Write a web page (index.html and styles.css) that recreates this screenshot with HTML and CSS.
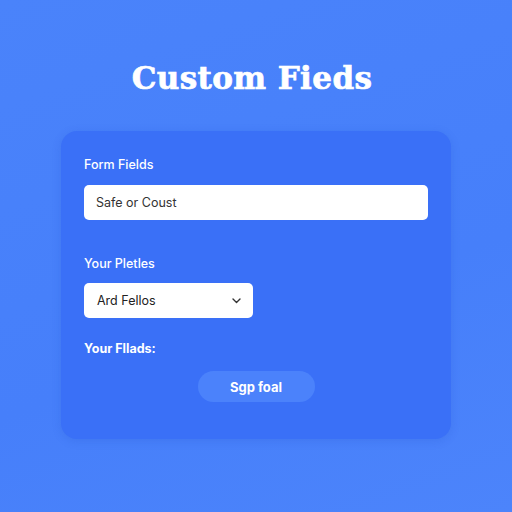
FILE: index.html
```html
<!DOCTYPE html>
<html>
<head>
<meta charset="utf-8">
<link rel="stylesheet" href="styles.css">
</head>
<body>
<main class="page">
  <h1 class="title">Custom Fieds</h1>
  <section class="card">
    <label class="label">Form Fields</label>
    <div class="input">Safe or Coust</div>
    <label class="label label-second">Your Pletles</label>
    <div class="select">
      <span>Ard Fellos</span>
      <svg class="chev" width="9" height="6" viewBox="0 0 9 6"><path d="M1 1l3.5 3.5L8 1" fill="none" stroke="#333" stroke-width="1.4" stroke-linecap="round" stroke-linejoin="round"/></svg>
    </div>
    <div class="label label-bold">Your Fllads:</div>
    <div class="btn-row"><button class="btn">Sgp foal</button></div>
  </section>
</main>
</body>
</html>
```
FILE: styles.css
```css
html, body {
  margin: 0;
  padding: 0;
  width: 512px;
  height: 512px;
  overflow: hidden;
}
body {
  background: linear-gradient(160deg, #4a83fa 0%, #467ffa 60%, #4c84fb 100%);
  font-family: "Inter", "Liberation Sans", sans-serif;
}
.page {
  display: flex;
  flex-direction: column;
  align-items: center;
}
.title {
  margin: 58px 8px 0 0;
  height: 40px;
  line-height: 40px;
  font-family: "DejaVu Serif", serif;
  font-weight: bold;
  font-size: 31px;
  color: #fff;
  letter-spacing: 0.4px;
  -webkit-text-stroke: 0.7px #fff;
}
.card {
  margin-top: 33px;
  width: 390px;
  height: 308px;
  box-sizing: border-box;
  background: #3a70f7;
  border-radius: 16px;
  padding: 25px 23px 0 23px;
  display: flex;
  flex-direction: column;
  box-shadow: 0 2px 10px rgba(20, 60, 180, 0.15);
}
.label {
  color: #fff;
  font-size: 12.5px;
  font-weight: 500;
  height: 18px;
  line-height: 18px;
}
.input {
  margin-top: 11px;
  height: 35px;
  line-height: 35px;
  background: #fff;
  border-radius: 5px;
  padding: 0 12px;
  font-size: 12.5px;
  color: #333;
}
.label-second {
  margin-top: 35px;
}
.select {
  margin-top: 10px;
  width: 169px;
  height: 35px;
  background: #fff;
  border-radius: 5px;
  padding: 0 12px 0 13px;
  box-sizing: border-box;
  display: flex;
  align-items: center;
  justify-content: space-between;
  font-size: 12.5px;
  color: #222;
}
.label-bold {
  margin-top: 22px;
  font-weight: 700;
}
.btn-row {
  display: flex;
  justify-content: center;
  margin-top: 13px;
}
.btn {
  width: 117px;
  height: 31px;
  border: none;
  border-radius: 16px;
  background: #4b82fb;
  color: #fff;
  font-family: "Inter", "Liberation Sans", sans-serif;
  font-weight: 700;
  font-size: 13px;
}
```
